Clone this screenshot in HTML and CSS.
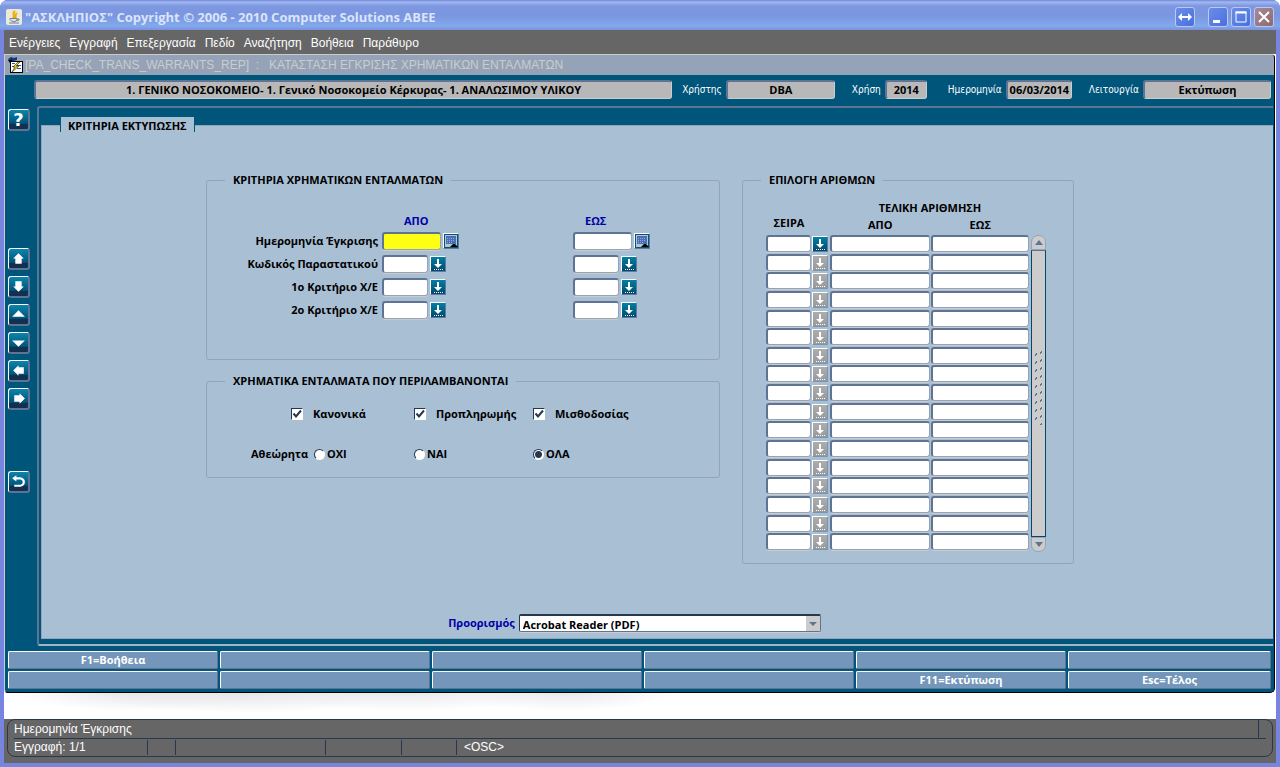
FILE: index.html
```html
<!DOCTYPE html>
<html lang="el">

<head>
    <meta charset="UTF-8">
    <meta name="viewport" content="width=device-width, initial-scale=1.0">
    <title>"ΑΣΚΛΗΠΙΟΣ"</title>
    <link rel="stylesheet" href="styles.css">
</head>

<body>
    <svg class="sprites" aria-hidden="true">
        <symbol id="list" viewBox="0 0 14 14">
            <path d="M6 2h2v5h3l-4 4-4-4h3z" fill="#fff" />
            <path d="M3 12.500h9" stroke="#fff" stroke-dasharray="1 1" />
        </symbol>
        <symbol id="calendar" viewBox="0 0 14 14">
            <rect x="1" y="1" width="12" height="12" fill="#bcc3cc" />
            <rect x="2" y="2" width="10" height="8" fill="#4a6fb4" />
            <path d="M3 4.500h8M3 6.500h8M3 8.500h6" stroke="#8ba9d6" stroke-dasharray="1 1" />
            <path d="M6 13l3-3h2l3 3z" fill="#000" />
        </symbol>
    </svg>

    <div class="window">
        <header class="titlebar">
            <svg class="java" viewBox="0 0 16 16">
                <rect width="16" height="16" rx="2" fill="#ece9d8" />
                <path d="M9 2C5 5 10 6 7 9M11 4c-3 2 0 3-2 5" fill="none" stroke="#e8b000" stroke-width="2" />
                <path d="M4 9.500h7v1q0 2-3 2T4 10.500zM11 10h2v1l-2 1M3 14h10" fill="none" stroke="#6a7fa0" />
            </svg>
            <h1>"ΑΣΚΛΗΠΙΟΣ" Copyright © 2006 - 2010 Computer Solutions ABEE</h1>
            <button class="win-btn win-switch" aria-label="Εναλλαγή">
                <svg viewBox="0 0 18 18"><path d="M2 9l4-4v3h6V5l4 4-4 4v-3H6v3z" fill="#fff" /></svg>
            </button>
            <button class="win-btn" aria-label="Ελαχιστοποίηση">
                <svg viewBox="0 0 18 18"><path d="M4 12h7v3H4z" fill="#fff" /></svg>
            </button>
            <button class="win-btn" aria-label="Μεγιστοποίηση">
                <svg viewBox="0 0 18 18"><path d="M4 4h10v10H4z" fill="none" stroke="#fff" /><path d="M3.500 4.500h11" stroke="#fff" stroke-width="2" /></svg>
            </button>
            <button class="win-btn win-close" aria-label="Κλείσιμο">
                <svg viewBox="0 0 18 18"><path d="M4 4l10 10M14 4L4 14" stroke="#fff" stroke-width="2" /></svg>
            </button>
        </header>

        <nav class="menu">
            <button>Ενέργειες</button>
            <button>Εγγραφή</button>
            <button>Επεξεργασία</button>
            <button>Πεδίο</button>
            <button>Αναζήτηση</button>
            <button>Βοήθεια</button>
            <button>Παράθυρο</button>
        </nav>

        <div class="desktop">
            <section class="form-window">
                <div class="form-title">
                    <svg viewBox="0 0 16 16">
                        <path d="M1 2l3-2 3 1 3-1v3l-3 1v3H4z" fill="#123a7a" />
                        <path d="M1 3h4v3H3z" fill="#000" />
                        <rect x="3.500" y="4.500" width="12" height="11" fill="#fff" stroke="#000" />
                        <path d="M5 6.500h3M5 9.500h2M10 8.500h4M10 11.500h4" stroke="#2a55c0" />
                        <path d="M11 5l-5 5h2l-3 5 7-6H9l4-4z" fill="#e8d800" stroke="#000" stroke-width=".5" />
                    </svg>
                    <h2>[PA_CHECK_TRANS_WARRANTS_REP] &nbsp;: &nbsp; ΚΑΤΑΣΤΑΣΗ ΕΓΚΡΙΣΗΣ ΧΡΗΜΑΤΙΚΩΝ ΕΝΤΑΛΜΑΤΩΝ</h2>
                </div>

                <div class="info">
                    <output class="info-unit">1. ΓΕΝΙΚΟ ΝΟΣΟΚΟΜΕΙΟ- 1. Γενικό Νοσοκομείο Κέρκυρας- 1. ΑΝΑΛΩΣΙΜΟΥ ΥΛΙΚΟΥ</output>
                    <label for="user">Χρήστης</label>
                    <output id="user" class="info-user">DBA</output>
                    <label for="year">Χρήση</label>
                    <output id="year" class="info-year">2014</output>
                    <label for="date">Ημερομηνία</label>
                    <output id="date" class="info-date">06/03/2014</output>
                    <label for="mode">Λειτουργία</label>
                    <output id="mode" class="info-mode">Εκτύπωση</output>
                </div>

                <div class="work">
                    <div class="tools">
                        <button class="tool tool-help" aria-label="Βοήθεια">?</button>
                        <div class="tool-group">
                            <button class="tool" aria-label="Πρώτη"><svg viewBox="0 0 16 16"><path d="M8 3l5 5h-2v5H5V8H3z" /></svg></button>
                            <button class="tool" aria-label="Τελευταία"><svg viewBox="0 0 16 16"><path d="M8 13L3 8h2V3h6v5h2z" /></svg></button>
                            <button class="tool" aria-label="Προηγούμενη"><svg viewBox="0 0 16 16"><path d="M8 4l6 6H2z" /></svg></button>
                            <button class="tool" aria-label="Επόμενη"><svg viewBox="0 0 16 16"><path d="M8 12L2 6h12z" /></svg></button>
                            <button class="tool" aria-label="Αριστερά"><svg viewBox="0 0 16 16"><path d="M3 8l5-5v2h5v6H8v2z" /></svg></button>
                            <button class="tool" aria-label="Δεξιά"><svg viewBox="0 0 16 16"><path d="M14 8L9 3v2H4v6h5v2z" /></svg></button>
                        </div>
                        <button class="tool" aria-label="Επιστροφή"><svg viewBox="0 0 16 16"><path d="M2 5l4-3v2h4q4 1 4 4.500T10 13H4v-2h6q2-.5 2-2.500T10 6H6v2z" /></svg></button>
                    </div>

                    <main class="frame">
                        <div class="tabs"><button class="tab">ΚΡΙΤΗΡΙΑ ΕΚΤΥΠΩΣΗΣ</button></div>
                        <div class="page">
                            <div class="groups">
                                <div class="left">
                                    <fieldset class="criteria">
                                        <legend>ΚΡΙΤΗΡΙΑ ΧΡΗΜΑΤΙΚΩΝ ΕΝΤΑΛΜΑΤΩΝ</legend>
                                        <div class="criteria-grid">
                                            <span></span>
                                            <span class="col-name">ΑΠΟ</span>
                                            <span class="col-name">ΕΩΣ</span>

                                            <label for="d1">Ημερομηνία Έγκρισης</label>
                                            <div class="field"><input type="text" id="d1" class="date current"><button class="lov lov-date" aria-label="Ημερολόγιο"><svg><use href="#calendar" /></svg></button></div>
                                            <div class="field"><input type="text" class="date" aria-label="Ημερομηνία Έγκρισης έως"><button class="lov lov-date" aria-label="Ημερολόγιο"><svg><use href="#calendar" /></svg></button></div>

                                            <label for="c1">Κωδικός Παραστατικού</label>
                                            <div class="field"><input type="text" id="c1"><button class="lov" aria-label="Λίστα"><svg><use href="#list" /></svg></button></div>
                                            <div class="field"><input type="text" aria-label="Κωδικός έως"><button class="lov" aria-label="Λίστα"><svg><use href="#list" /></svg></button></div>

                                            <label for="k1">1ο Κριτήριο Χ/Ε</label>
                                            <div class="field"><input type="text" id="k1"><button class="lov" aria-label="Λίστα"><svg><use href="#list" /></svg></button></div>
                                            <div class="field"><input type="text" aria-label="1ο Κριτήριο έως"><button class="lov" aria-label="Λίστα"><svg><use href="#list" /></svg></button></div>

                                            <label for="k2">2ο Κριτήριο Χ/Ε</label>
                                            <div class="field"><input type="text" id="k2"><button class="lov" aria-label="Λίστα"><svg><use href="#list" /></svg></button></div>
                                            <div class="field"><input type="text" aria-label="2ο Κριτήριο έως"><button class="lov" aria-label="Λίστα"><svg><use href="#list" /></svg></button></div>
                                        </div>
                                    </fieldset>

                                    <fieldset class="included">
                                        <legend>ΧΡΗΜΑΤΙΚΑ ΕΝΤΑΛΜΑΤΑ ΠΟΥ ΠΕΡΙΛΑΜΒΑΝΟΝΤΑΙ</legend>
                                        <div class="options checks">
                                            <span></span>
                                            <label><input type="checkbox" checked>Κανονικά</label>
                                            <label><input type="checkbox" checked>Προπληρωμής</label>
                                            <label><input type="checkbox" checked>Μισθοδοσίας</label>
                                        </div>
                                        <div class="options radios">
                                            <span>Αθεώρητα</span>
                                            <label><input type="radio" name="unseen">ΟΧΙ</label>
                                            <label><input type="radio" name="unseen">ΝΑΙ</label>
                                            <label><input type="radio" name="unseen" checked>ΟΛΑ</label>
                                        </div>
                                    </fieldset>
                                </div>

                                <fieldset class="numbers">
                                    <legend>ΕΠΙΛΟΓΗ ΑΡΙΘΜΩΝ</legend>
                                    <div class="numbers-box">
                                        <table>
                                            <thead>
                                                <tr>
                                                    <th rowspan="2" class="series">ΣΕΙΡΑ</th>
                                                    <th rowspan="2" class="pick"></th>
                                                    <th colspan="2">ΤΕΛΙΚΗ ΑΡΙΘΜΗΣΗ</th>
                                                </tr>
                                                <tr>
                                                    <th>ΑΠΟ</th>
                                                    <th>ΕΩΣ</th>
                                                </tr>
                                            </thead>
                                            <tbody id="rows"></tbody>
                                        </table>
                                        <div class="scroll">
                                            <button class="scroll-up" aria-label="Πάνω"><svg viewBox="0 0 8 5"><path d="M4 0l4 5H0z" /></svg></button>
                                            <div class="scroll-thumb"><span class="grip"></span></div>
                                            <button class="scroll-down" aria-label="Κάτω"><svg viewBox="0 0 8 5"><path d="M4 5L0 0h8z" /></svg></button>
                                        </div>
                                    </div>
                                </fieldset>
                            </div>

                            <div class="target">
                                <label for="target">Προορισμός</label>
                                <div class="select">
                                    <select id="target">
                                        <option>Acrobat Reader (PDF)</option>
                                    </select>
                                    <span class="select-arrow"><svg viewBox="0 0 8 4"><path d="M0 0h8L4 4z" /></svg></span>
                                </div>
                            </div>
                        </div>
                    </main>
                </div>

                <div class="keys">
                    <button>F1=Βοήθεια</button>
                    <button></button>
                    <button></button>
                    <button></button>
                    <button></button>
                    <button></button>
                    <button></button>
                    <button></button>
                    <button></button>
                    <button></button>
                    <button>F11=Εκτύπωση</button>
                    <button>Esc=Τέλος</button>
                </div>
            </section>
        </div>

        <footer class="status">
            <div class="status-box">
                <div class="status-hint"><span>Ημερομηνία Έγκρισης</span></div>
                <div class="status-row">
                    <span>Εγγραφή: 1/1</span>
                    <span></span>
                    <span></span>
                    <span></span>
                    <span></span>
                    <span>&lt;OSC&gt;</span>
                </div>
            </div>
        </footer>
    </div>

    <script src="script.js"></script>
</body>

</html>
```

FILE: styles.css
```css
* {
    box-sizing: border-box;
}

body {
    margin: 0;
    background: #fff;
    font: bold 11px/14px "Open Sans", "Noto Sans", sans-serif;
    color: #000;
}

button,
input,
select {
    font: inherit;
    color: inherit;
    margin: 0;
    padding: 0;
    border: none;
    border-radius: 0;
}

button svg {
    display: block;
}

.sprites {
    display: none;
}

.window {
    display: flex;
    flex-direction: column;
    min-height: 100vh;
    border: 4px solid #7785e0;
    border-top: none;
    border-radius: 8px 8px 0 0;
    background: #7785e0;
}

/* title bar */
.titlebar {
    display: flex;
    align-items: center;
    height: 30px;
    margin: 0 -4px;
    padding: 3px 6px 0;
    border-radius: 8px 8px 0 0;
    background: linear-gradient(#6d86dd 0, #a2b9ef 2px, #7d97e0 6px, #7b96e0 16px, #82a9eb 26px, #7a91de 30px);
}

.java {
    width: 16px;
    height: 16px;
}

.titlebar h1 {
    flex: 1;
    margin: 0 0 0 3px;
    font: bold 13px/18px "Open Sans", "Noto Sans", sans-serif;
    color: #dbe4fa;
}

.win-btn {
    width: 20px;
    height: 20px;
    margin-left: 3px;
    border: 1px solid #b9c9f2;
    border-radius: 3px;
    background: linear-gradient(135deg, #6a8ee8, #4a6fe0);
}

.win-switch {
    margin-right: 10px;
}

.win-close {
    background: linear-gradient(135deg, #a58a98, #8e6a70);
}

/* menu */
.menu {
    display: flex;
    gap: 9px;
    height: 24px;
    padding: 0 5px;
    background: #666;
    font: 12px/26px "Liberation Sans", sans-serif;
    color: #fff;
}

.menu button {
    background: none;
}

.desktop {
    flex: 1;
    padding-right: 1px;
    background:
        radial-gradient(ellipse 120px 20px at 130px 637px, #e6e6e6, transparent),
        radial-gradient(ellipse 150px 20px at 240px 639px, #e6e6e6, transparent),
        radial-gradient(ellipse 150px 20px at 400px 637px, #e8e8e8, transparent),
        radial-gradient(ellipse 110px 20px at 560px 637px, #e8e8e8, transparent),
        #fff;
}

.form-window {
    border: 1px solid #000;
    border-top-color: #ccc;
    border-left-color: #ccc;
    border-radius: 0 4px 5px 4px;
    background: #00557b;
}

.form-title {
    display: flex;
    align-items: center;
    height: 20px;
    padding-left: 2px;
    background: #94a3b7;
    border-radius: 0 3px 0 0;
}

.form-title svg {
    width: 16px;
    height: 16px;
}

.form-title h2 {
    margin: 0 0 0 2px;
    font: 12px/20px "Liberation Sans", sans-serif;
    color: #ccc;
    white-space: nowrap;
}

/* info line */
.info {
    display: flex;
    align-items: center;
    padding: 5px 3px 7px 29px;
}

.info label {
    margin-left: 10px;
    padding-right: 4px;
    font: 10px/14px "DejaVu Sans Condensed", "DejaVu Sans", sans-serif;
    color: #fff;
    white-space: nowrap;
}

.info output {
    height: 19px;
    border: 1px solid #ccc;
    border-top: 2px solid #5f7395;
    border-left: 2px solid #5f7395;
    border-radius: 3px;
    background: #b8b8b8;
    line-height: 16px;
    text-align: center;
    white-space: nowrap;
    overflow: hidden;
}

.info-unit {
    flex: 1;
}

.info-user {
    width: 109px;
    margin-right: 7px;
}

.info-year {
    width: 42px;
    margin-right: 11px;
}

.info-date {
    width: 66px;
    margin-right: 7px;
}

.info-mode {
    width: 128px;
}

/* toolbar */
.work {
    display: flex;
}

.tools {
    width: 32px;
    padding: 3px 0 0 3px;
}

.tool {
    display: block;
    width: 22px;
    height: 22px;
    padding: 1px;
    border: 2px solid #5f7395;
    border-top: 1px solid #fff;
    border-left: 1px solid #fff;
    border-radius: 3px;
    background: linear-gradient(#0a85ab, #00557b 70%, #12304f 75%);
    color: #fff;
}

.tool svg {
    width: 17px;
    height: 17px;
    fill: #fff;
}

.tool-help {
    font: bold 18px/17px "DejaVu Sans", sans-serif;
}

.tool-group {
    display: flex;
    flex-direction: column;
    gap: 6px;
    margin: 117px 0 61px;
}

/* page */
.frame {
    flex: 1;
    margin-right: 1px;
    padding: 9px 0 5px 2px;
    border: 2px solid #5f7395;
    border-right: none;
    border-bottom-color: #a5b1c4;
    border-radius: 3px 0 0 3px;
}

.tabs {
    height: 8px;
    padding-left: 19px;
}

.tab {
    position: relative;
    height: 15px;
    padding: 3px 7px 0;
    border: solid #00557b;
    border-width: 0 1px;
    background: #a9bfd4;
    line-height: 12px;
}

.page {
    padding: 48px 199px 6px 164px;
    border: 1px solid #94a3b7;
    border-right: none;
    background: #a9bfd4;
}

.groups {
    display: grid;
    grid-template-columns: 514fr 332fr;
    gap: 22px;
}

fieldset {
    min-width: 0;
    margin: 0;
    padding: 0;
    border: 1px solid #94a3b7;
    border-radius: 3px;
}

legend {
    margin-left: 18px;
    padding: 0 8px;
    line-height: 12px;
}

.criteria {
    height: 186px;
}

.criteria-grid {
    display: grid;
    grid-template-columns: 171px 187px 1fr;
    grid-template-rows: 16px;
    grid-auto-rows: 23px;
    column-gap: 4px;
    align-items: center;
    padding-top: 27px;
}

.criteria-grid label {
    text-align: right;
    white-space: nowrap;
}

.criteria-grid .col-name {
    padding-left: 22px;
    color: #0000a5;
}

.criteria-grid .col-name + .col-name {
    padding-left: 12px;
}

.field {
    display: flex;
    align-items: center;
    gap: 2px;
}

input[type="text"] {
    width: 46px;
    height: 18px;
    border: 1px solid #94a3b7;
    border-top: 2px solid #5f7395;
    border-left: 2px solid #5f7395;
    border-radius: 3px;
    background: #fff;
    box-shadow: 0 1px #ccc;
}

input[type="text"].date {
    width: 59px;
}

input[type="text"].current {
    background: #ffff14;
}

.lov {
    width: 16px;
    height: 16px;
    border: 1px solid #5f7ba0;
    border-top-color: #fff;
    border-left-color: #fff;
    border-radius: 1px;
    background: linear-gradient(#0080a5, #00486d);
}

.lov-date {
    background: #00557b;
}

.lov svg {
    width: 14px;
    height: 14px;
}

.lov:disabled {
    border-bottom-color: #7396ba;
    border-right-color: #7396ba;
    background: linear-gradient(#adadad, #999);
}

/* included warrants */
.included {
    height: 103px;
    margin-top: 15px;
}

.options {
    display: grid;
    grid-template-columns: 107px 100px 119px 1fr;
    height: 40px;
    align-items: center;
    white-space: nowrap;
}

.checks {
    grid-template-columns: 84px 123px 119px 1fr;
    margin-top: 7px;
}

.options span {
    padding-left: 44px;
}

.options label {
    display: flex;
    align-items: center;
    gap: 2px;
}

.checks label {
    gap: 10px;
}

.options input {
    appearance: none;
    width: 12px;
    height: 12px;
    border: 1px solid #fff;
    border-top-color: #26374f;
    border-left-color: #26374f;
    background: #fff;
}

.options input[type="checkbox"]:checked {
    background: url('data:image/svg+xml,<svg xmlns="http://www.w3.org/2000/svg" viewBox="0 0 10 10"><rect width="10" height="10" fill="white"/><path d="M1.500 4.500l2.500 3 5-6" fill="none" stroke="%2326374f" stroke-width="2"/></svg>');
}

.options input[type="radio"] {
    width: 11px;
    height: 11px;
    border-radius: 50%;
}

.options input[type="radio"]:checked {
    background: radial-gradient(#26374f 3px, #fff 4px);
}

/* numbers */
.numbers {
    height: 390px;
}

.numbers-box {
    display: flex;
    align-items: flex-end;
    padding: 15px 27px 0 23px;
}

.numbers table {
    flex: 1;
    border-collapse: collapse;
    table-layout: fixed;
}

.numbers th,
.numbers td {
    padding: 0;
}

.numbers th {
    height: 17px;
    vertical-align: top;
    font-weight: bold;
}

.numbers .series {
    width: 46px;
    padding-top: 15px;
}

.numbers .pick {
    width: 18px;
}

.numbers tbody {
    height: 317px;
}

.numbers td {
    vertical-align: top;
}

.numbers input[type="text"] {
    display: block;
    width: calc(100% - 1px);
    height: 17px;
}

.numbers .lov {
    display: block;
    margin-top: 1px;
}

.scroll {
    display: flex;
    flex-direction: column;
    width: 15px;
    height: 317px;
    margin-left: 1px;
}

.scroll button {
    display: flex;
    align-items: center;
    justify-content: center;
    height: 15px;
    border: 1px solid #94a3b7;
    background: #ccc;
}

.scroll svg {
    width: 8px;
    height: 5px;
    fill: #5f7395;
}

.scroll-up {
    border-radius: 7px 7px 0 0;
}

.scroll-down {
    border-radius: 0 0 7px 7px;
}

.scroll-thumb {
    display: flex;
    flex: 1;
    align-items: center;
    justify-content: center;
    border: 1px solid #00486d;
    border-top-color: #5f7395;
    background: #ccc;
}

.grip {
    width: 8px;
    height: 76px;
    margin-bottom: 14px;
    background:
        linear-gradient(135deg, transparent 40%, #5f7395 40% 60%, transparent 60%) 0 2px / 2px 8px repeat-y,
        linear-gradient(135deg, transparent 40%, #5f7395 40% 60%, transparent 60%) 5px 0 / 2px 8px repeat-y;
}

/* destination */
.target {
    display: flex;
    align-items: center;
    justify-content: center;
    gap: 4px;
    margin-top: 50px;
    padding-right: 11px;
    color: #0000a5;
}

.select {
    position: relative;
    width: 302px;
    color: #000;
}

.select select {
    display: block;
    appearance: none;
    width: 100%;
    height: 18px;
    padding: 2px 18px 0 3px;
    border: 1px solid #5f7395;
    border-top: 2px solid #26374f;
    border-left-color: #26374f;
    border-radius: 2px;
    background: #fff;
    box-shadow: 0 1px #ccc;
}

.select-arrow {
    position: absolute;
    top: 2px;
    right: 1px;
    display: flex;
    align-items: center;
    justify-content: center;
    width: 14px;
    height: 15px;
    background: #ccc;
    pointer-events: none;
}

.select-arrow svg {
    width: 8px;
    height: 4px;
    fill: #5f7395;
}

/* function keys */
.keys {
    display: grid;
    grid-template-columns: repeat(5, 210fr) 203fr;
    grid-auto-rows: 18px;
    gap: 2px;
    padding: 5px 3px 3px;
}

.keys button {
    border: 1px solid #5f7395;
    border-top-color: #fff;
    border-left-color: #fff;
    border-radius: 2px;
    background: #7396ba;
    color: #fff;
}

/* status line */
.status {
    padding: 0 3px 6px;
    background: #666;
    font: 12px/18px "Liberation Sans", sans-serif;
    color: #fff;
}

.status-box {
    padding: 0 6px;
    border: 1px solid #26374f;
    border-radius: 8px;
}

.status-hint {
    display: flex;
    padding-right: 7px;
    border-bottom: 1px solid #26374f;
}

.status-hint span {
    flex: 1;
    padding-top: 1px;
    border-right: 1px solid #26374f;
    line-height: 17px;
}

.status-row {
    display: grid;
    grid-template-columns: 134px 28px 150px 76px 55px 1fr;
    height: 17px;
    padding: 1px 0 2px;
    line-height: 15px;
}

.status-row span {
    border-right: 1px solid #26374f;
}

.status-row span:last-child {
    padding-left: 7px;
    border: none;
}
```

FILE: script.js
```js
// the block shows 17 records, only the first one is enabled
const rows = document.getElementById("rows");
for (let i = 0; i < 17; i++) {
    const tr = document.createElement("tr");
    tr.innerHTML = `
        <td><input type="text" aria-label="Σειρά ${i + 1}"></td>
        <td><button class="lov" aria-label="Λίστα" ${i > 0 ? "disabled" : ""}><svg><use href="#list" /></svg></button></td>
        <td><input type="text" aria-label="Από ${i + 1}"></td>
        <td><input type="text" aria-label="Έως ${i + 1}"></td>`;
    rows.appendChild(tr);
}
```
